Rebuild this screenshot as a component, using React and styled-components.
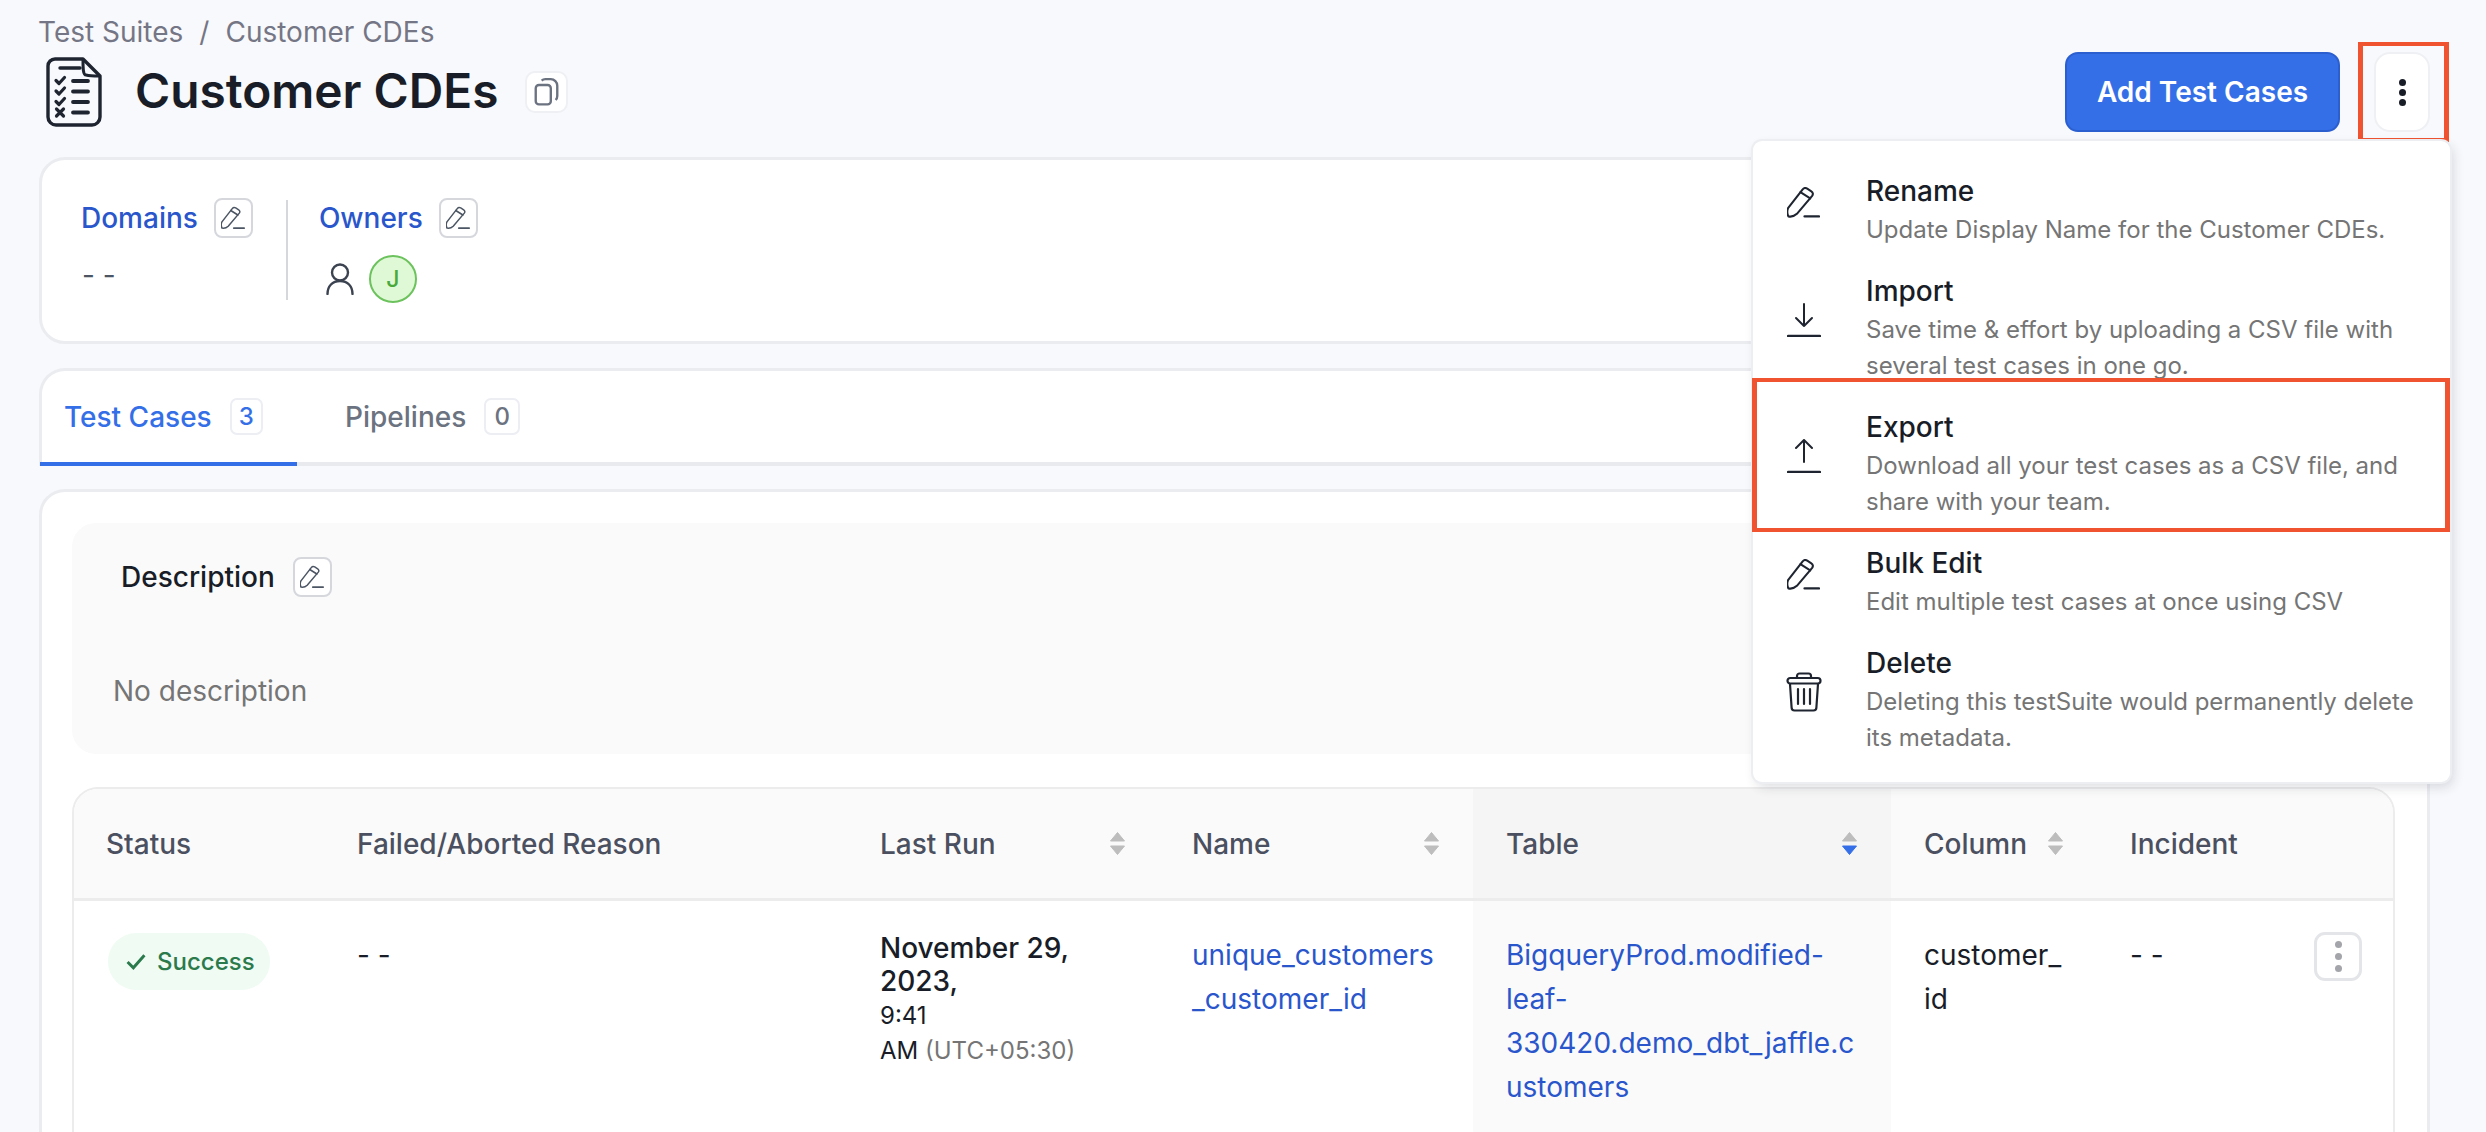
import React from 'react';
import styled, { createGlobalStyle } from 'styled-components';

const Global = createGlobalStyle`
  html, body { margin: 0; padding: 0; height: 100%; overflow: hidden; background: #f8f9fc; }
  body { font-family: Inter, "Liberation Sans", sans-serif; -webkit-font-smoothing: antialiased; }
  * { box-sizing: border-box; }
`;

const Page = styled.div`
  position: relative; width: 2486px; height: 1132px; overflow: hidden;
  padding: 15px 56px 0 39px; background: #f8f9fc;
`;
const Breadcrumb = styled.div`
  display: flex; gap: 16px; height: 34px; margin-left: -1px; align-items: center; font-size: 28px; color: #757685; line-height: 34px;
`;
const HeaderRow = styled.div`
  display: flex; align-items: center; height: 80px; margin-top: 3px;
`;
const TitleIcon = styled.svg`
  width: 56px; height: 70px; margin-left: 7px; flex: none;
`;
const Title = styled.h1`
  margin: 0 0 0 33px; font-size: 47.8px; font-weight: 600; color: #181d27; line-height: 1;
`;
const CopyButton = styled.div`
  display: flex; align-items: center; justify-content: center; width: 43px; height: 42px; margin-left: 26px;
  background: #fff; border: 2px solid #eef0f4; border-radius: 10px; color: #6b7280;
`;
const Actions = styled.div`
  margin-left: auto; display: flex; align-items: center; margin-right: -19px;
`;
const PrimaryButton = styled.div`
  display: flex; align-items: center; justify-content: center; width: 275px; height: 80px;
  background: #356fe8; border: 2px solid #2b5fd0; border-radius: 13px; color: #fff;
  font-size: 28px; font-weight: 600;
`;
const Marked = styled.div`
  margin-left: 18px; width: 91px; height: 100px; border: solid #ef5330; border-width: 4px 5px;
  display: flex; align-items: center; justify-content: center;
`;
const MoreButton = styled.div`
  width: 56px; height: 80px; background: #fff; border: 2px solid #eef0f4; border-radius: 16px;
  display: flex; flex-direction: column; align-items: center; justify-content: center; gap: 3px;
  margin-right: 3px;
`;
const Dot = styled.span`
  width: 7px; height: 7px; border-radius: 50%; background: ${p => p.$color || '#181d27'};
`;
const Card = styled.section`
  background: #fff; border: 3px solid #eaecf0;
`;
const InfoCard = styled(Card)`
  margin-top: 25px; height: 187px; border-radius: 26px; display: flex; padding: 38px 39px 0;
`;
const InfoBlock = styled.div`
  display: flex; flex-direction: column;
`;
const InfoHead = styled.div`
  display: flex; align-items: center; gap: 16px; height: 40px;
`;
const InfoLabel = styled.span`
  font-size: 28px; font-weight: 500; color: #2a56cc;
`;
const Divider = styled.div`
  width: 2px; height: 100px; background: #d5d7db; margin: 2px 31px 0 33px;
`;
const EditButton = styled.div`
  display: flex; align-items: center; justify-content: center; width: 39px; height: 40px;
  background: #fff; border: 2px solid #d5d7dc; border-radius: 8px; color: #4b5563; flex: none;
`;
const Dash = styled.div`
  font-size: 28px; color: ${p => p.$color || '#4b5563'}; line-height: 44px;
  margin: ${p => p.$margin || '0'};
`;
const OwnerRow = styled.div`
  display: flex; align-items: center; gap: 15px; margin: 17px 0 0 7px;
`;
const Avatar = styled.div`
  width: 48px; height: 48px; border-radius: 50%; background: #dff9d6; border: 2px solid #6cc25c; color: #4aa93c;
  display: flex; align-items: center; justify-content: center; font-size: 23px; font-weight: 500;
`;
const TabsCard = styled.nav`
  margin-top: 24px; height: 98px; background: #fff; border: 3px solid #eaecf0; border-bottom: 0; border-radius: 26px 26px 0 0;
  display: flex; position: relative; box-shadow: inset 0 -4px 0 #e9eaee;
`;
const Tab = styled.div`
  display: flex; align-items: center; gap: 18px; height: 95px; padding: 0 0 4px ${p => p.$pad}px;
  margin-left: ${p => p.$shift || 0}px;
  width: ${p => p.$width}px; font-size: 28px; font-weight: 500; color: ${p => p.$active ? '#356fe8' : '#6b7280'};
  box-shadow: ${p => p.$active ? 'inset 0 -4px 0 #356fe8' : 'none'};
`;
const Count = styled.span`
  display: flex; align-items: center; justify-content: center; width: ${p => p.$width}px; height: 37px;
  border: 2px solid #eceef3; border-radius: 7px; font-size: 24px;
`;
const ContentCard = styled(Card)`
  margin-top: 23px; height: 700px; border-radius: 26px 26px 0 0; padding: 31px 32px 30px 30px;
`;
const DescBox = styled.div`
  height: 231px; background: #fafafa; border-radius: 24px; padding: 34px 0 0 49px;
`;
const DescHead = styled.div`
  display: flex; align-items: center; gap: 18px; font-size: 28px; font-weight: 500; color: #181d27;
`;
const DescEmpty = styled.div`
  margin: 77px 0 0 -8px; font-size: 28px; color: #757575;
`;
const TableWrap = styled.div`
  margin-top: 33px; border: 2px solid #ececec; border-radius: 26px 26px 0 0; height: 500px; overflow: hidden;
  display: grid; grid-template-columns: 250px 523px 312px 314px 418px 206px 1fr; grid-template-rows: 112px 1fr;
`;
const Head = styled.div`
  display: flex; align-items: center; justify-content: space-between; padding: 0 34px 0 ${p => p.$pad || 33}px;
  background: ${p => p.$sorted ? '#f5f5f5' : '#fafafa'}; border-bottom: 3px solid #ececec;
  font-size: 28px; font-weight: 500; color: #4b5060;
`;
const Cell = styled.div`
  padding: ${p => p.$top || 32}px 16px 0 33px; font-size: 28px; line-height: 44px; color: #181d27;
  background: ${p => p.$sorted ? '#fafafa' : '#fff'};
  position: relative;
`;
const LinkText = styled.a`
  color: #2a56cc; display: block;
`;
const Pill = styled.span`
  display: inline-flex; align-items: center; gap: 11px; width: 162px; height: 57px; margin-left: 1px; padding-left: 18px;
  border-radius: 29px; background: #effbf3; color: #2b7a4b; font-size: 24px; font-weight: 500; line-height: 1;
`;
const DateMain = styled.div`
  font-size: 28px; line-height: 33px; font-weight: 500; color: #181d27;
`;
const DateSmall = styled.div`
  font-size: 24px; line-height: 35px; color: #181d27;
`;
const Tz = styled.span`
  color: #757575;
`;
const RowMore = styled.div`
  position: absolute; top: 31px; right: 31px; width: 48px; height: 49px; background: #fff; border: 3px solid #e4e5e8; border-radius: 11px;
  display: flex; flex-direction: column; gap: 5px; align-items: center; justify-content: center;
`;
const Menu = styled.div`
  position: absolute; top: 141px; left: 1753px; width: 697px; height: 641px; padding: 18px 0 0;
  background: #fff; border-radius: 9px; box-shadow: 0 0 0 2px #eceef1, 3px 5px 12px rgba(30, 40, 60, .16);
`;
const MenuItem = styled.div`
  position: relative; display: grid; grid-template-columns: 113px 1fr; align-items: center; padding: 11.5px 0;
  &::after {
    content: ${p => p.$marked ? '""' : 'none'}; position: absolute; top: -17px; left: -1px; right: 0; bottom: -1px;
    border: solid #ef5330; border-width: 4px 5px;
  }
`;
const MenuIcon = styled.svg`
  margin: 0 0 14px ${p => p.$left || 34}px; display: block;
`;
const MenuTitle = styled.div`
  font-size: 28px; font-weight: 500; color: #181d27; line-height: 40px; margin-bottom: 1px;
`;
const MenuDesc = styled.div`
  font-size: 24px; color: #757575; line-height: 36px; white-space: pre-line;
`;

const pencilBody = 'M1 20.5 15 2.5c1.3-1.7 3-1.9 4.6-.9l4 2.6c1.7 1.1 1.9 2.8.8 4.3L9.6 26c-2.4 2.3-5.6 3-8.2 2.5-1.2-2.3-1.5-5.2-.4-8Z';
const Pencil = ({ size = 24 }) => (
  <svg width={size} height={size} viewBox="0 0 32 30" fill="none" stroke="currentColor" strokeWidth="2" strokeLinejoin="round" strokeLinecap="round">
    <path d={pencilBody} />
    <path d="m13 5 9.5 6" />
    <path d="M17 28.5h14" strokeWidth="2.2" />
  </svg>
);
const SortIcon = ({ down }) => (
  <svg width="15" height="23" viewBox="0 0 15 23">
    <path d="M7.5 0.5 14.5 9H0.5Z" fill="#bdbdbd" stroke="#bdbdbd" strokeLinejoin="round" />
    <path d="M0.5 14H14.5L7.5 22.5Z" fill={down ? '#356fe8' : '#bdbdbd'} stroke={down ? '#356fe8' : '#bdbdbd'} strokeLinejoin="round" />
  </svg>
);
const DocIcon = () => (
  <TitleIcon viewBox="0 0 56 70" fill="none" stroke="#1f2530" strokeLinecap="round" strokeLinejoin="round">
    <path d="M9 2h28l17 17v41a8 8 0 0 1-8 8H10a8 8 0 0 1-8-8V9a7 7 0 0 1 7-7Z" strokeWidth="3.4" />
    <path d="M37 3c0 8 0 15 3 15 4 1 9 1 13 1" strokeWidth="3" />
    <path d="M14 11h20" strokeWidth="3.4" />
    <path d="M10 23.5l3 3 5.5-6M10 34l3 3 5.5-6M10 44.5l3 3 5.5-6" strokeWidth="3.2" />
    <path d="M10.5 52l7 7M17.5 52l-7 7" strokeWidth="3.2" />
    <path d="M27 24h15M27 34.5h15M27 45h15M27 55.5h15" strokeWidth="3.8" />
  </TitleIcon>
);
const items = [
  { title: 'Rename', desc: 'Update Display Name for the Customer CDEs.', icon: 'edit' },
  { title: 'Import', desc: 'Save time & effort by uploading a CSV file with\nseveral test cases in one go.', icon: 'down' },
  { title: 'Export', desc: 'Download all your test cases as a CSV file, and\nshare with your team.', icon: 'up', marked: true },
  { title: 'Bulk Edit', desc: 'Edit multiple test cases at once using CSV', icon: 'edit' },
  { title: 'Delete', desc: 'Deleting this testSuite would permanently delete\nits metadata.', icon: 'trash' },
];
const MenuGlyph = ({ kind }) => {
  if (kind === 'edit') return (
    <MenuIcon $left={34} width="33" height="31" viewBox="0 0 32 30" fill="none" stroke="#1f2530" strokeWidth="2" strokeLinejoin="round" strokeLinecap="round">
      <path d={pencilBody} />
      <path d="m13 5 9.5 6" />
      <path d="M17 28.5h14" strokeWidth="2.2" />
    </MenuIcon>
  );
  if (kind === 'down' || kind === 'up') return (
    <MenuIcon $left={34} width="34" height="34" viewBox="0 0 34 34" fill="none" stroke="#1f2530" strokeWidth="2" strokeLinecap="round" strokeLinejoin="round">
      {kind === 'down'
        ? <path d="M17 1v22M9 15l8 8 8-8" />
        : <path d="M17 23V1M9 9l8-8 8 8" />}
      <path d="M1 33h32" strokeWidth="2.4" />
    </MenuIcon>
  );
  return (
    <MenuIcon $left={33} width="36" height="40" viewBox="0 0 36 40" fill="none" stroke="#1f2530" strokeWidth="2.2" strokeLinejoin="round" strokeLinecap="round">
      <path d="M11 6V4a2.5 2.5 0 0 1 2.5-2.5h9A2.5 2.5 0 0 1 25 4v2" />
      <rect x="1.5" y="6" width="33" height="5.5" rx="2.7" />
      <path d="M4 12l1.6 23.5a3 3 0 0 0 3 3h18.8a3 3 0 0 0 3-3L32 12" />
      <path d="M12 17v15M18 17v15M24 17v15" />
    </MenuIcon>
  );
};

export default function App() {
  return (
    <Page>
      <Global />
      <Breadcrumb><span>Test Suites</span><span>/</span><span>Customer CDEs</span></Breadcrumb>
      <HeaderRow>
        <DocIcon />
        <Title>Customer CDEs</Title>
        <CopyButton>
          <svg width="25" height="28" viewBox="0 0 23 26" fill="none" stroke="currentColor" strokeWidth="2.2" strokeLinejoin="round">
            <rect x="1.5" y="6.5" width="14" height="18" rx="3" />
            <path d="M7 2.5c1-1 2-1.4 3.5-1.4h5a6 6 0 0 1 6 6v9.5c0 1.6-.5 2.8-1.5 3.8" />
          </svg>
        </CopyButton>
        <Actions>
          <PrimaryButton>Add Test Cases</PrimaryButton>
          <Marked>
            <MoreButton><Dot /><Dot /><Dot /></MoreButton>
          </Marked>
        </Actions>
      </HeaderRow>
      <InfoCard>
        <InfoBlock>
          <InfoHead><InfoLabel>Domains</InfoLabel><EditButton><Pencil /></EditButton></InfoHead>
          <Dash $margin="15px 0 0 1px">- -</Dash>
        </InfoBlock>
        <Divider />
        <InfoBlock>
          <InfoHead><InfoLabel>Owners</InfoLabel><EditButton><Pencil /></EditButton></InfoHead>
          <OwnerRow>
            <svg width="28" height="32" viewBox="0 0 28 32" fill="none" stroke="#3b4250" strokeWidth="2.4" strokeLinecap="round">
              <circle cx="14" cy="9.5" r="8" />
              <path d="M1.5 31c0-8 5-13 12.5-13s12.5 5 12.5 13" />
            </svg>
            <Avatar>J</Avatar>
          </OwnerRow>
        </InfoBlock>
      </InfoCard>
      <TabsCard>
        <Tab $active $width={257} $pad={24} $shift={-2}>Test Cases<Count $width={33}>3</Count></Tab>
        <Tab $width={300} $pad={48}>Pipelines<Count $width={36}>0</Count></Tab>
      </TabsCard>
      <ContentCard>
        <DescBox>
          <DescHead>Description<EditButton><Pencil /></EditButton></DescHead>
          <DescEmpty>No description</DescEmpty>
        </DescBox>
        <TableWrap>
          <Head $pad={32}>Status</Head>
          <Head>Failed/Aborted Reason</Head>
          <Head>Last Run<SortIcon /></Head>
          <Head>Name<SortIcon /></Head>
          <Head $sorted>Table<SortIcon down /></Head>
          <Head>Column<SortIcon /></Head>
          <Head>Incident</Head>
          <Cell>
            <Pill>
              <svg width="20" height="17" viewBox="0 0 19 16" fill="none" stroke="currentColor" strokeWidth="2.8"><path d="M1.5 8.5 7 14 17.5 2" /></svg>
              Success
            </Pill>
          </Cell>
          <Cell><Dash $color="#181d27">- -</Dash></Cell>
          <Cell $top={31}>
            <DateMain>November 29,<br />2023,</DateMain>
            <DateSmall>9:41<br />AM <Tz>(UTC+05:30)</Tz></DateSmall>
          </Cell>
          <Cell><LinkText>unique_customers<br />_customer_id</LinkText></Cell>
          <Cell $sorted><LinkText>BigqueryProd.modified-<br />leaf-<br />330420.demo_dbt_jaffle.c<br />ustomers</LinkText></Cell>
          <Cell>customer_<br />id</Cell>
          <Cell>
            <Dash $color="#181d27">- -</Dash>
            <RowMore><Dot $color="#a3a5ab" /><Dot $color="#a3a5ab" /><Dot $color="#a3a5ab" /></RowMore>
          </Cell>
        </TableWrap>
      </ContentCard>
      <Menu>
        {items.map(it => (
          <MenuItem key={it.title} $marked={it.marked}>
            <MenuGlyph kind={it.icon} />
            <div>
              <MenuTitle>{it.title}</MenuTitle>
              <MenuDesc>{it.desc}</MenuDesc>
            </div>
          </MenuItem>
        ))}
      </Menu>
    </Page>
  );
}
